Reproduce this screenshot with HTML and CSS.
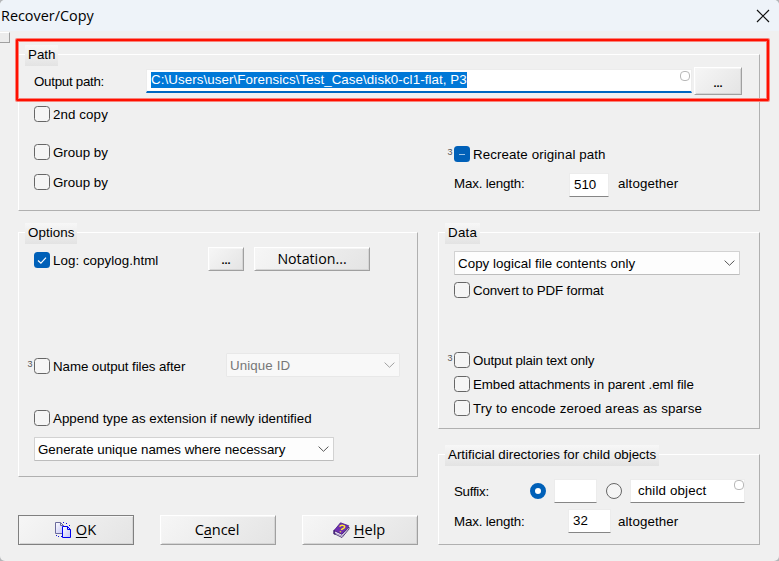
FILE: index.html
```
<!DOCTYPE html>
<html lang="en">
<head>
<meta charset="utf-8">
<title>Recover/Copy</title>
<link rel="stylesheet" href="styles.css">
</head>
<body>
<div class="dialog">
  <header class="titlebar">
    <span class="title">Recover/Copy</span>
    <svg class="close" width="14" height="14" viewBox="0 0 14 14"><path d="M1 1L13 13M13 1L1 13"/></svg>
  </header>
  <span class="stub"></span>
  <div class="highlight"></div>

  <main class="content">
    <section class="group path">
      <h2 class="legend w-path">Path</h2>
      <div class="output-row">
        <span class="label ls-n3">Output path:</span>
        <div class="output-input"><span class="selected">C:\Users\user\Forensics\Test_Case\disk0-cl1-flat, P3</span><i class="dot"></i></div>
        <button class="btn browse">...</button>
      </div>
      <div class="path-cols">
        <div class="path-left">
          <label class="check"><i class="box"></i><span class="ls-p1">2nd copy</span></label>
          <label class="check group-first"><i class="box"></i><span>Group by</span></label>
          <label class="check group-second"><i class="box"></i><span>Group by</span></label>
        </div>
        <div class="path-right">
          <label class="check"><sup class="hint">3</sup><i class="box filled"><svg viewBox="0 0 16 16"><path class="dash" d="M5 8.5H11"/></svg></i><span class="ls-p1">Recreate original path</span></label>
          <div class="length-row">
            <span class="label ls-n2">Max. length:</span><span class="input num">510</span><span class="unit ls-p1">altogether</span>
          </div>
        </div>
      </div>
    </section>

    <div class="columns">
      <div class="left">
        <section class="group options">
          <h2 class="legend w-options ls-p1">Options</h2>
          <div class="log-row">
            <label class="check"><i class="box filled"><svg viewBox="0 0 16 16"><path class="tick" d="M4 8.5L6.9 11.2L12 5.6"/></svg></i><span class="ls-p05">Log: copylog.html</span></label>
            <button class="btn dots">...</button>
            <button class="btn notation">Notation...</button>
          </div>
          <div class="name-row">
            <label class="check"><sup class="hint">3</sup><i class="box"></i><span class="ls-n1">Name output files after</span></label>
            <div class="select disabled"><span class="ls-p1">Unique ID</span><svg class="chev" viewBox="0 0 11 6"><path d="M.6 .6L5.5 5.3L10.4 .6"/></svg></div>
          </div>
          <label class="check append"><i class="box"></i><span>Append type as extension if newly identified</span></label>
          <div class="select unique"><span>Generate unique names where necessary</span><svg class="chev" viewBox="0 0 11 6"><path d="M.6 .6L5.5 5.3L10.4 .6"/></svg></div>
        </section>
        <footer class="actions">
          <button class="btn action default">
            <svg class="ico-copy" width="18" height="18" viewBox="0 0 18 18">
              <defs><linearGradient id="pg" x1="0" y1="0" x2="1" y2="1"><stop offset="0" stop-color="#fff"/><stop offset="1" stop-color="#c3c3f6"/></linearGradient></defs>
              <path d="M1.5 1.5H6.5L9.5 4.5V12.5H1.5Z" fill="url(#pg)" stroke="#6b6b9c"/>
              <path d="M6.5 1.5V4.5H9.5" fill="none" stroke="#6b6b9c"/>
              <path d="M8.5 5.5H13.5L16.5 8.5V16.5H8.5Z" fill="url(#pg)" stroke="#0000f0"/>
              <path d="M13.5 5.5V8.5H16.5" fill="none" stroke="#0000f0"/>
              <path d="M9 1.5H12M12 2.5H15M15 4.5H17M2 14.5H4M4 15.5H8" fill="none" stroke="#1616d8" stroke-dasharray="1 2"/>
            </svg><span><u>O</u>K</span></button>
          <button class="btn action"><span class="cancel">C<u>a</u>ncel</span></button>
          <button class="btn action">
            <svg class="ico-book" width="17" height="16" viewBox="0 0 17 16">
              <path d="M1 8L2 12L9 15.5L16 7V5L9 12Z" fill="#f3effa" stroke="#2b1059" stroke-width=".8"/>
              <path d="M1.5 11L9 14L15.5 6" fill="none" stroke="#8c7aa8" stroke-width=".7"/>
              <path d="M7.5 .8L15.8 3.8L9 12.3L1 8.6Z" fill="#6f2fb0" stroke="#4a1c86" stroke-width=".8"/>
              <path d="M1 8.6L.9 11.5L2.4 12.6" fill="none" stroke="#35116c" stroke-width="1.2"/>
              <path d="M6.6 4.6C7.8 2.8 12 3 11.7 5C11.5 6.6 8.9 6.3 8.3 8M7.6 9.2L7.3 10.2" fill="none" stroke="#ffe930" stroke-width="1.5"/>
            </svg><span><u>H</u>elp</span></button>
        </footer>
      </div>

      <div class="right">
        <section class="group data">
          <h2 class="legend w-data ls-p2">Data</h2>
          <div class="select contents"><span class="ls-p05">Copy logical file contents only</span><svg class="chev" viewBox="0 0 11 6"><path d="M.6 .6L5.5 5.3L10.4 .6"/></svg></div>
          <label class="check pdf"><i class="box"></i><span class="ls-n15">Convert to PDF format</span></label>
          <label class="check plain"><sup class="hint">3</sup><i class="box"></i><span class="ls-n2">Output plain text only</span></label>
          <label class="check stacked"><i class="box"></i><span class="ls-n1">Embed attachments in parent .eml file</span></label>
          <label class="check stacked"><i class="box"></i><span class="ls-p15">Try to encode zeroed areas as sparse</span></label>
        </section>
        <section class="group artificial">
          <h2 class="legend w-artificial">Artificial directories for child objects</h2>
          <div class="suffix-row">
            <span class="label ls-n3">Suffix:</span><i class="radio on"></i><span class="input empty"></span><i class="radio"></i><span class="input child"><span class="ls-p15">child object</span><i class="dot"></i></span>
          </div>
          <div class="length-row">
            <span class="label ls-n2">Max. length:</span><span class="input num">32</span><span class="unit ls-p1">altogether</span>
          </div>
        </section>
      </div>
    </div>
  </main>
</div>
</body>
</html>
```
FILE: styles.css
```
* { box-sizing: border-box; }
body {
  margin: 0;
  background: #b4b6b9;
  font: 13.333px/16px "Liberation Sans", Arial, sans-serif;
  color: #000;
  white-space: nowrap;
}
i { font-style: normal; display: block; flex: none; }
.dialog { position: relative; height: 561px; background: #f0f0f0; border-radius: 5px; overflow: hidden; }

.titlebar {
  height: 31px;
  background: #eef3f9;
  display: flex;
  justify-content: space-between;
  align-items: center;
  padding: 0 9px 0 1px;
}
.title { font: 14.4px/20px "Open Sans", "Noto Sans", sans-serif; }
.close { stroke: #111; stroke-width: 1.2; fill: none; }

.stub {
  position: absolute; left: -1px; top: 32px; width: 11px; height: 11px;
  border: 1px solid #fff; border-right-color: #a0a0a0; border-bottom-color: #a0a0a0;
  background: #ececec;
}
.highlight {
  position: absolute; z-index: 2; left: 16px; top: 39px; width: 753px; height: 62px;
  border: 2px solid #ff1000; border-radius: 1px;
  box-shadow: 0 0 0 1px #f8837c, inset 0 0 0 1px #f8837c;
}

.content { padding: 23px 19px 0 18px; }
.group {
  border: 1px solid;
  border-color: #fff #b0b0b0 #b0b0b0 #fff;
}
.legend {
  margin: -10px 0 0 6px;
  height: 21px;
  padding-left: 3px;
  font: inherit;
  line-height: 19px;
  background: linear-gradient(#f7f7f7, #e3e3e3);
}
.w-path { width: 33px; }
.w-options { width: 52px; }
.w-data { width: 35px; }
.w-artificial { width: 214px; }

.ls-n3 { letter-spacing: -.28px; }
.ls-n2 { letter-spacing: -.18px; }
.ls-n15 { letter-spacing: -.13px; }
.ls-n1 { letter-spacing: -.08px; }
.ls-p05 { letter-spacing: .05px; }
.ls-p1 { letter-spacing: .1px; }
.ls-p15 { letter-spacing: .14px; }
.ls-p2 { letter-spacing: .25px; }

.check { display: flex; align-items: center; height: 16px; position: relative; }
.check > span { margin-left: 3px; padding-top: 2px; }
.box { width: 16px; height: 16px; border: 1px solid #666; border-radius: 3.5px; background: #f5f5f5; }
.box.filled { border: 0; background: #0060b8; }
.box svg { display: block; width: 16px; height: 16px; fill: none; }
.tick { stroke: #fff; stroke-width: 1.2; }
.dash { stroke: #9cc4e8; stroke-width: 1; }
.hint { position: absolute; left: -6.5px; top: 2px; font-size: 9px; line-height: 8px; color: #555; }

.btn {
  padding: 0;
  border: 1px solid;
  border-color: #fff #a0a0a0 #a0a0a0 #fff;
  background: linear-gradient(135deg, #f6f6f6, #e4e4e4);
  box-shadow: inset 1px 1px #f5f5f5, inset -1px -1px #d5d5d5;
  color: #000;
  font: 14.6px/20px "Open Sans", "Noto Sans", sans-serif;
  display: flex;
  align-items: center;
  justify-content: center;
}
.browse, .dots { font: bold 11px/16px "Liberation Sans", Arial, sans-serif; }
.input {
  flex: none;
  display: block;
  height: 24px;
  padding-left: 4px;
  line-height: 22px;
  background: #fff;
  border: 1px solid #ececec;
  border-bottom-color: #868686;
}
.select {
  display: flex;
  align-items: center;
  justify-content: space-between;
  height: 24px;
  padding: 0 4px 0 3px;
  background: #fdfdfd;
  border: 1px solid #d2d2d2;
  border-bottom-color: #bdbdbd;
  border-radius: 1px;
}
.select > span { padding-top: 2px; }
.select.disabled { color: #777; background: #f8f8f8; border-color: #e8e8e8; }
.chev { width: 11px; height: 6px; fill: none; stroke: #555; stroke-width: 1; }
.disabled .chev { stroke: #a0a0a0; }
.dot { position: absolute; width: 10px; height: 10px; border: 1px solid #b8b8b8; border-radius: 4px; }

.path { height: 157px; }
.output-row { display: flex; margin: 1px 0 0 15px; height: 28px; }
.output-row .label { width: 112px; line-height: 30px; }
.output-input {
  position: relative; width: 546px; height: 24px; margin-top: 2px;
  padding: 2px 0 0 5px; background: #fff;
  border: 1px solid #ececec; border-bottom: 2px solid #0067c0;
}
.selected { display: block; width: 316px; height: 16px; line-height: 16px; background: #0078d7; color: #fff; letter-spacing: .075px; margin-left: -1px; }
.output-input .dot { right: 1px; top: 1px; }
.browse { width: 48px; height: 28px; margin-left: 2px; padding-top: 4px; }
.path-cols { display: flex; margin: 11px 0 0 15px; }
.path-left { width: 420px; }
.group-first { margin-top: 22px; }
.group-second { margin-top: 14px; }
.path-right { padding-top: 40px; }
.length-row { display: flex; align-items: center; height: 24px; }
.path-right .length-row { margin-top: 11px; }
.path-right .label, .path-right .unit { padding-bottom: 2px; }
.length-row .label { width: 115px; }
.length-row .num { width: 40px; margin-right: 9px; }

.columns { display: flex; gap: 20px; margin-top: 21px; }
.left { width: 400px; }
.right { width: 322px; }

.options { height: 245px; padding-left: 15px; }
.options .legend, .data .legend, .artificial .legend { margin-left: -9px; }
.log-row { display: flex; margin-top: 3px; height: 24px; }
.log-row .check { width: 174px; margin-top: 5px; }
.dots { width: 36px; height: 24px; padding-top: 2px; }
.notation { width: 116px; height: 24px; margin-left: 10px; padding-bottom: 1px; font-size: 14.2px; }
.name-row { display: flex; margin-top: 82px; height: 24px; }
.name-row .check { width: 192px; margin-top: 5px; }
.disabled { width: 174px; }
.append { margin-top: 33px; }
.unique { width: 300px; margin-top: 11px; }

.actions { display: flex; gap: 26px; margin-top: 38px; }
.action { width: 116px; height: 30px; padding: 0 2px 2px 0; }
.action svg { margin: 2px 4px 0 0; }
.default { outline: 1px solid #808080; outline-offset: -1px; border-color: #808080; }
.cancel { letter-spacing: -.1px; }
u { text-underline-offset: 2px; text-decoration-thickness: 1px; }

.data { height: 197px; padding-left: 15px; }
.contents { width: 286px; margin-top: 7px; }
.pdf { margin-top: 7px; }
.plain { margin-top: 54px; }
.stacked { margin-top: 8px; }

.artificial { height: 91px; margin-top: 25px; padding-left: 15px; }
.suffix-row { display: flex; align-items: center; height: 24px; margin-top: 13px; }
.suffix-row .label { width: 76px; }
.artificial .label, .artificial .unit { padding-top: 2px; }
.radio { width: 16px; height: 16px; border: 1px solid #666; border-radius: 50%; background: #f5f5f5; }
.radio.on { border: 5px solid #0060b8; background: #fff; }
.empty { width: 43px; margin: 0 9px 0 8px; }
.child { position: relative; width: 115px; margin-left: 8px; padding-left: 7px; }
.child .dot { right: 0; top: 0; }
.artificial .length-row { margin-top: 6px; }
.artificial .num { width: 43px; margin: 0 7px 0 -1px; }
```
